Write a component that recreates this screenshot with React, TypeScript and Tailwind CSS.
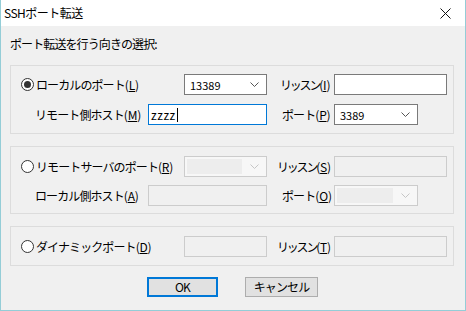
import React from 'react'

const ui = "font-['Noto_Sans_CJK_JP',sans-serif] text-[12px] tracking-[-0.9px] leading-[16px] text-black"

function Accel({ text, k, tight }: { text: string; k: string; tight?: boolean }) {
  return (
    <span className="whitespace-nowrap">
      <span className={tight ? 'tracking-[-2.2px]' : ''}>{text}</span>
      <span className="tracking-[-0.2px]">
        (<u>{k}</u>)
      </span>
    </span>
  )
}

function Radio({ checked }: { checked?: boolean }) {
  return (
    <span className="w-[13px] h-[13px] rounded-full border border-[#333] bg-white flex items-center justify-center shrink-0">
      {checked && <span className="w-[7px] h-[7px] rounded-full bg-[#333]" />}
    </span>
  )
}

function Chevron({ disabled }: { disabled?: boolean }) {
  return (
    <svg width="9" height="5" viewBox="0 0 9 5" className="shrink-0">
      <polyline points="0.5,0.5 4.5,4.5 8.5,0.5" fill="none" stroke={disabled ? '#c6c6c6' : '#555'} strokeWidth="1" />
    </svg>
  )
}

function Combo({ w, value, disabled }: { w: string; value?: string; disabled?: boolean }) {
  if (disabled) {
    return (
      <div className={`${w} shrink-0 h-[21px] border border-[#cccccc] bg-[#f7f7f7] flex items-center pl-[2px] pr-[7px] gap-[8px]`}>
        <div className="flex-1 h-[15px] bg-[#ededed]" />
        <Chevron disabled />
      </div>
    )
  }
  return (
    <div className={`${w} shrink-0 h-[21px] border border-[#7a7a7a] bg-white flex items-center pl-[5px] pr-[7px]`}>
      <span className="flex-1 text-[11px] tracking-normal">{value}</span>
      <Chevron />
    </div>
  )
}

function TextBox({ w, value, disabled, focused }: { w: string; value?: string; disabled?: boolean; focused?: boolean }) {
  const border = disabled ? 'border-[#cccccc] bg-[#f0f0f0]' : focused ? 'border-[#0078d7] bg-white' : 'border-[#7a7a7a] bg-white'
  return (
    <div className={`${w} shrink-0 h-[21px] border ${border} flex items-center pl-[2px]`}>
      {value && <span className="text-[12px] tracking-[0.5px]">{value}</span>}
      {focused && <span className="w-[1px] h-[14px] bg-black ml-[1px]" />}
    </div>
  )
}

function Group({ children, pt, pb, gap }: { children: React.ReactNode; pt: string; pb: string; gap?: string }) {
  return <div className={`ml-[9px] mr-[11px] border border-[#dcdcdc] ${pt} ${pb} flex flex-col ${gap ?? ''}`}>{children}</div>
}

function Cell({ w, pl, children }: { w: string; pl: string; children: React.ReactNode }) {
  return <div className={`${w} ${pl} shrink-0 flex items-center gap-[2px] whitespace-nowrap`}>{children}</div>
}

export default function App() {
  return (
    <div className={`w-[466px] h-[311px] bg-[#f0f0f0] border-x border-b border-[#94cdd7] flex flex-col ${ui}`}>
      {/* title bar */}
      <div className="h-[26px] bg-white flex items-center justify-between pl-[3px] pr-[14px] shrink-0">
        <span className="tracking-[-0.5px]">SSHポート転送</span>
        <svg width="11" height="11" viewBox="0 0 11 11">
          <path d="M0.5 0.5 L10.5 10.5 M10.5 0.5 L0.5 10.5" stroke="#111" strokeWidth="1" />
        </svg>
      </div>

      <div className="pt-[10px] pl-[9px]">ポート転送を行う向きの選択:</div>

      <div className="mt-[13px]">
        <Group pt="pt-[8px]" pb="pb-[8px]" gap="gap-[9px]">
          <div className="flex items-center h-[21px]">
            <Cell w="w-[173px]" pl="pl-[10px]">
              <Radio checked />
              <Accel text="ローカルのポート" k="L" />
            </Cell>
            <Combo w="w-[83px]" value="13389" />
            <Cell w="w-[67px]" pl="pl-[13px]">
              <Accel text="リッスン" k="I" tight />
            </Cell>
            <TextBox w="w-[113px]" />
          </div>
          <div className="flex items-center h-[21px]">
            <Cell w="w-[137px]" pl="pl-[24px]">
              <Accel text="リモート側ホスト" k="M" />
            </Cell>
            <TextBox w="w-[119px]" value="zzzz" focused />
            <Cell w="w-[67px]" pl="pl-[15px]">
              <Accel text="ポート" k="P" />
            </Cell>
            <Combo w="w-[84px]" value="3389" />
          </div>
        </Group>
      </div>

      <div className="mt-[12px]">
        <Group pt="pt-[9px]" pb="pb-[7px]" gap="gap-[8px]">
          <div className="flex items-center h-[21px]">
            <Cell w="w-[173px]" pl="pl-[10px]">
              <Radio />
              <Accel text="リモートサーバのポート" k="R" />
            </Cell>
            <Combo w="w-[83px]" disabled />
            <Cell w="w-[67px]" pl="pl-[10px]">
              <Accel text="リッスン" k="S" tight />
            </Cell>
            <TextBox w="w-[113px]" disabled />
          </div>
          <div className="flex items-center h-[21px]">
            <Cell w="w-[137px]" pl="pl-[24px]">
              <Accel text="ローカル側ホスト" k="A" />
            </Cell>
            <TextBox w="w-[119px]" disabled />
            <Cell w="w-[67px]" pl="pl-[15px]">
              <Accel text="ポート" k="O" />
            </Cell>
            <Combo w="w-[84px]" disabled />
          </div>
        </Group>
      </div>

      <div className="mt-[12px]">
        <Group pt="pt-[9px]" pb="pb-[8px]">
          <div className="flex items-center h-[21px]">
            <Cell w="w-[173px]" pl="pl-[10px]">
              <Radio />
              <Accel text="ダイナミックポート" k="D" />
            </Cell>
            <TextBox w="w-[83px]" disabled />
            <Cell w="w-[67px]" pl="pl-[10px]">
              <Accel text="リッスン" k="T" tight />
            </Cell>
            <TextBox w="w-[113px]" disabled />
          </div>
        </Group>
      </div>

      <div className="mt-[11px] flex pl-[146px] gap-[27px]">
        <button className="w-[71px] h-[20px] border-2 border-[#0078d7] bg-[#e1e1e1] flex items-center justify-center">
          OK
        </button>
        <button className="w-[73px] h-[20px] border border-[#adadad] bg-[#e1e1e1] flex items-center justify-center">
          キャンセル
        </button>
      </div>
    </div>
  )
}
